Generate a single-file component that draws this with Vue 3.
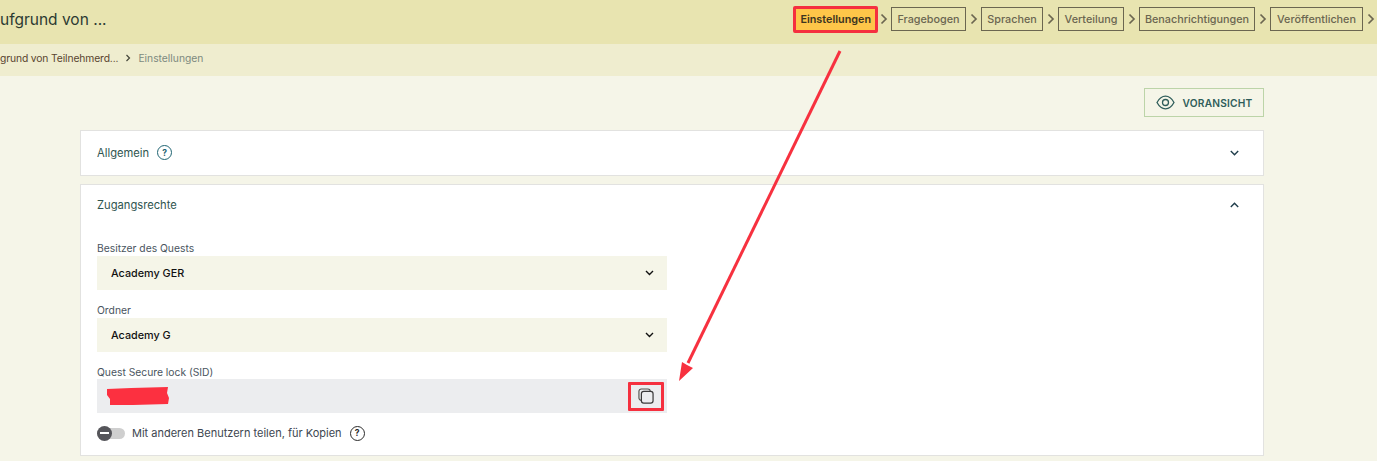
<script setup>
const steps = [
  { name: 'Fragebogen', width: 75 },
  { name: 'Sprachen', width: 62 },
  { name: 'Verteilung', width: 66 },
  { name: 'Benachrichtigungen', width: 116 },
  { name: 'Veröffentlichen', width: 93 }
]
</script>

<template>
  <div class="page">
    <header class="topbar">
      <div class="title">ufgrund von ...</div>
      <nav class="steps">
        <span class="step active">Einstellungen</span>
        <template v-for="s in steps" :key="s.name">
          <svg class="sep" width="8" height="12" viewBox="0 0 8 12"><path d="M1.5 1.5 6 6l-4.500 4.500" fill="none" stroke="#6b6650" stroke-width="1.700"/></svg>
          <span class="step" :style="{ width: s.width + 'px' }">{{ s.name }}</span>
        </template>
        <svg class="sep" width="8" height="12" viewBox="0 0 8 12"><path d="M1.5 1.5 6 6l-4.500 4.500" fill="none" stroke="#6b6650" stroke-width="1.700"/></svg>
      </nav>
    </header>
    <div class="crumbs">
      <span class="crumb-link">grund von Teilnehmerd...</span>
      <svg width="6" height="8" viewBox="0 0 6 8"><path d="M1.500 1 4.500 4 1.500 7" fill="none" stroke="#45463a" stroke-width="1.200"/></svg>
      <span class="crumb-now">Einstellungen</span>
    </div>
    <main class="main">
      <div class="actions">
        <button class="preview">
          <svg width="19" height="15" viewBox="0 0 19 15"><path d="M1 7.500C3.500 3 6.300 1.200 9.500 1.200S15.500 3 18 7.500C15.500 12 12.700 13.800 9.500 13.800S3.500 12 1 7.500Z" fill="none" stroke="#2f5d5a" stroke-width="1.300"/><circle cx="9.500" cy="7.500" r="3" fill="none" stroke="#2f5d5a" stroke-width="1.300"/></svg>
          VORANSICHT
        </button>
      </div>
      <section class="card head-only">
        <div class="card-head">
          <span class="card-title">Allgemein</span>
          <span class="help teal">?</span>
          <svg class="chev" width="9" height="6" viewBox="0 0 9 6"><path d="M.8 1l3.700 3.700L8.200 1" fill="none" stroke="#1f3d4a" stroke-width="1.400"/></svg>
        </div>
      </section>
      <section class="card">
        <div class="card-head">
          <span class="card-title">Zugangsrechte</span>
          <svg class="chev" width="9" height="6" viewBox="0 0 9 6"><path d="M.8 5l3.700-3.700L8.200 5" fill="none" stroke="#1f3d4a" stroke-width="1.400"/></svg>
        </div>
        <div class="form">
          <label class="field">
            <span class="label">Besitzer des Quests</span>
            <div class="select">
              <span>Academy GER</span>
              <svg width="9" height="6" viewBox="0 0 9 6"><path d="M1 1l3.500 3.500L8 1" fill="none" stroke="#111" stroke-width="1.400"/></svg>
            </div>
          </label>
          <label class="field">
            <span class="label">Ordner</span>
            <div class="select">
              <span>Academy G</span>
              <svg width="9" height="6" viewBox="0 0 9 6"><path d="M1 1l3.500 3.500L8 1" fill="none" stroke="#111" stroke-width="1.400"/></svg>
            </div>
          </label>
          <label class="field last">
            <span class="label">Quest Secure lock (SID)</span>
            <div class="sid">
              <svg class="redact" width="62" height="19" viewBox="0 0 62 19"><path d="M0 2 24 1 61 0 60 6 62 11 61 17 26 18 3 18 3 12 0 8Z" fill="#fc3040"/></svg>
              <span class="copy">
                <svg width="16" height="16" viewBox="0 0 17 17"><rect x="1" y="1" width="12" height="12" rx="2.500" fill="none" stroke="#50504c" stroke-width="1.200"/><rect x="3.600" y="3.600" width="12.400" height="12.400" rx="2.500" fill="#ecedef" stroke="#3b3b3b" stroke-width="1.300"/></svg>
              </span>
            </div>
          </label>
          <div class="share">
            <span class="toggle"><span class="knob"></span></span>
            <span class="share-text">Mit anderen Benutzern teilen, für Kopien</span>
            <span class="help dark">?</span>
          </div>
        </div>
      </section>
    </main>
    <svg class="annotation" width="1377" height="461" viewBox="0 0 1377 461">
      <path d="M840 51 688 363" stroke="#f7313f" stroke-width="3" fill="none"/>
      <path d="M679 381 682 362 687 365 693 368Z" fill="#f7313f"/>
    </svg>
  </div>
</template>

<style>
html, body { margin: 0; overflow: hidden; }
</style>

<style scoped>
.page {
  position: relative;
  width: 1377px;
  height: 461px;
  overflow: hidden;
  background: #f5f5e8;
  font-family: Inter, "Liberation Sans", sans-serif;
}
.topbar {
  height: 44px;
  background: #e8e4b0;
  display: flex;
  align-items: center;
  justify-content: space-between;
  padding-right: 5px;
  box-sizing: border-box;
}
.title {
  font-size: 15.500px;
  color: #2c3a32;
  margin-top: -6px;
}
.steps {
  display: flex;
  align-items: center;
  gap: 3px;
  margin-top: -6px;
  margin-right: -3px;
}
.sep { margin: 0 .5px; }
.step {
  height: 24px;
  box-sizing: border-box;
  border: 1px solid #6b6650;
  padding: 0;
  display: flex;
  align-items: center;
  justify-content: center;
  font-size: 10.800px;
  font-weight: 500;
  color: #6b6650;
  white-space: nowrap;
}
.step.active {
  height: 27px;
  border: 3px solid #f5303f;
  border-radius: 2px;
  background: #fec649;
  color: #3c3420;
  font-weight: 600;
  padding: 0 4px;
  margin-right: -2px;
}
.crumbs {
  height: 32px;
  padding-bottom: 4px;
  box-sizing: border-box;
  background: #efedcf;
  display: flex;
  align-items: center;
  gap: 7px;
  font-size: 10.300px;
}
.crumb-link { color: #5a4530; letter-spacing: -.12px; }
.crumb-now { color: #7d8a80; }
.main { padding: 12px 113px 0 80px; }
.actions {
  display: flex;
  justify-content: flex-end;
  margin-bottom: 13px;
}
.preview {
  width: 120px;
  height: 29px;
  border: 1px solid #bcd4a8;
  background: transparent;
  display: flex;
  align-items: center;
  justify-content: center;
  gap: 8px;
  font-family: inherit;
  font-size: 10.200px;
  font-weight: 600;
  letter-spacing: .2px;
  color: #2f5d5a;
  padding: 0;
}
.card {
  background: #fff;
  border: 1px solid #e2e2e0;
  box-sizing: border-box;
  height: 272px;
}
.card.head-only { height: 46px; margin-bottom: 8px; }
.card-head {
  height: 43px;
  display: flex;
  align-items: center;
  gap: 8px;
  padding: 0 24px 0 16px;
  position: relative;
}
.card:not(.head-only) .card-head { height: 40px; }
.card-title {
  font-size: 11.200px;
  font-weight: 400;
  color: #2f5550;
}
.chev { margin-left: auto; }
.help {
  width: 15px;
  height: 15px;
  box-sizing: border-box;
  border-radius: 50%;
  border: 1.300px solid;
  display: flex;
  align-items: center;
  justify-content: center;
  font-size: 8.500px;
  font-weight: 700;
}
.help.teal { color: #1f6472; }
.help.dark { color: #2b2b2b; }
.form {
  padding: 16px 0 0 16px;
  width: 570px;
  display: flex;
  flex-direction: column;
}
.field { display: flex; flex-direction: column; margin-bottom: 13px; }
.field.last { margin-bottom: 12px; }
.label {
  font-size: 10.300px;
  line-height: 15px;
  color: #4a5560;
}
.field.last .label { line-height: 14px; }
.select {
  height: 34px;
  background: #f5f5e8;
  display: flex;
  align-items: center;
  justify-content: space-between;
  padding: 0 13px 0 14px;
  font-size: 10.800px;
  font-weight: 500;
  color: #111;
}
.sid {
  height: 34px;
  background: #ecedef;
  display: flex;
  align-items: center;
  justify-content: space-between;
  padding: 0 3px 0 10px;
  box-sizing: border-box;
}
.redact { margin-top: 1px; }
.copy {
  width: 36px;
  height: 29px;
  box-sizing: border-box;
  border: 3px solid #f5303f;
  border-radius: 1px;
  display: flex;
  align-items: center;
  justify-content: center;
}
.share {
  display: flex;
  align-items: center;
  height: 16px;
}
.toggle {
  width: 28px;
  height: 11px;
  border-radius: 6px;
  background: #cfcfcf;
  position: relative;
  margin-right: 7px;
}
.knob {
  position: absolute;
  left: 0;
  top: -2px;
  width: 15px;
  height: 15px;
  border-radius: 50%;
  background: #55555a;
}
.knob::after {
  content: "";
  position: absolute;
  left: 3px;
  right: 3px;
  top: 6.500px;
  height: 2px;
  background: #fff;
}
.share-text {
  font-size: 11px;
  color: #3d4650;
  margin-right: 8px;
}
.annotation {
  position: absolute;
  left: 0;
  top: 0;
  pointer-events: none;
}
</style>
